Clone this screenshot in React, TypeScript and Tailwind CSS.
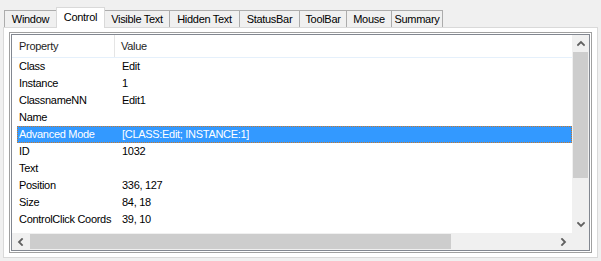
import { ReactNode } from "react";

type Row = {
  prop: string;
  value: string;
  selected?: boolean;
};

const tabs = [
  { label: "Window", w: "w-[53px]" },
  { label: "Control", w: "w-[49px]", active: true },
  { label: "Visible Text", w: "w-[66px]" },
  { label: "Hidden Text", w: "w-[71px]" },
  { label: "StatusBar", w: "w-[61px]" },
  { label: "ToolBar", w: "w-[48px]" },
  { label: "Mouse", w: "w-[46px]" },
  { label: "Summary", w: "w-[52px]" },
];

const rows: Row[] = [
  { prop: "Class", value: "Edit" },
  { prop: "Instance", value: "1" },
  { prop: "ClassnameNN", value: "Edit1" },
  { prop: "Name", value: "" },
  { prop: "Advanced Mode", value: "[CLASS:Edit; INSTANCE:1]", selected: true },
  { prop: "ID", value: "1032" },
  { prop: "Text", value: "" },
  { prop: "Position", value: "336, 127" },
  { prop: "Size", value: "84, 18" },
  { prop: "ControlClick Coords", value: "39, 10" },
];

// little chevrons used on the scroll buttons
const Arrow = ({ dir }: { dir: "up" | "down" | "left" | "right" }) => {
  const pts: Record<string, string> = {
    up: "1,5 4,2 7,5",
    down: "1,2 4,5 7,2",
    left: "5,1 2,4 5,7",
    right: "2,1 5,4 2,7",
  };
  return (
    <svg width="8" height="8" viewBox="0 0 8 8">
      <polyline
        points={pts[dir]}
        fill="none"
        stroke="#606060"
        strokeWidth="1.8"
        strokeLinecap="square"
      />
    </svg>
  );
};

const ScrollButton = ({ children }: { children: ReactNode }) => (
  <div className="w-[17px] h-[17px] flex items-center justify-center shrink-0">
    {children}
  </div>
);

const App = () => {
  return (
    <div
      className="w-[601px] h-[261px] bg-[#f0f0f0] text-[11px] tracking-[-0.3px] text-black overflow-hidden"
      style={{ fontFamily: '"Liberation Sans", Arial, sans-serif' }}
    >
      {/* tab strip */}
      <div className="flex items-end h-[27px] pl-[4px] pt-[6px]">
        {tabs.map((t, i) =>
          t.active ? (
            <div
              key={t.label}
              className={`${t.w} h-[21px] -ml-[1px] bg-white border border-b-0 border-[#d9d9d9] flex items-center justify-center pb-[2px] relative z-10 -mb-[1px]`}
            >
              {t.label}
            </div>
          ) : (
            <div
              key={t.label}
              className={`${t.w} h-[17px] bg-[#f0f0f0] border border-b-0 border-[#acacac] ${
                i === 0 ? "" : "-ml-[1px]"
              } flex items-center justify-center`}
            >
              {t.label}
            </div>
          )
        )}
      </div>

      {/* tab panel */}
      <div className="mx-[3px] h-[231px] border border-[#d9d9d9] bg-white pt-[4px] px-[5px]">
        <div className="h-[221px] border border-[#a0a0a0] p-[1px]">
          <div className="h-full border border-[#828790] bg-white flex flex-col">
            <div className="flex flex-1 min-h-0">
              {/* list */}
              <div className="flex-1 flex flex-col">
                <div className="h-[23px] flex items-center border-b border-[#e5f0fb] text-[#1e1e1e]">
                  <div className="w-[103px] pl-[7px] h-full flex items-center border-r border-[#e5e5e5]">
                    Property
                  </div>
                  <div className="pl-[6px]">Value</div>
                </div>
                {rows.map((r) => (
                  <div
                    key={r.prop}
                    className={
                      r.selected
                        ? "h-[17px] ml-[5px] flex items-center bg-[#3399ff] text-white border border-dotted border-[#c8782c]"
                        : "h-[17px] ml-[5px] flex items-center border border-transparent"
                    }
                  >
                    <div className="w-[103px] pl-[1px] whitespace-nowrap">{r.prop}</div>
                    <div className="pl-[1px] whitespace-nowrap">{r.value}</div>
                  </div>
                ))}
              </div>

              {/* vertical scrollbar */}
              <div className="w-[17px] bg-[#f0f0f0] flex flex-col">
                <ScrollButton>
                  <Arrow dir="up" />
                </ScrollButton>
                <div className="flex-1 flex flex-col">
                  <div className="h-[126px] mx-[1px] bg-[#cdcdcd]" />
                </div>
                <ScrollButton>
                  <Arrow dir="down" />
                </ScrollButton>
              </div>
            </div>

            {/* horizontal scrollbar */}
            <div className="h-[17px] flex bg-[#f0f0f0]">
              <ScrollButton>
                <Arrow dir="left" />
              </ScrollButton>
              <div className="flex-1 flex items-center">
                <div className="w-[421px] h-[15px] ml-[1px] bg-[#cdcdcd]" />
              </div>
              <ScrollButton>
                <Arrow dir="right" />
              </ScrollButton>
              <div className="w-[17px]" />
            </div>
          </div>
        </div>
      </div>
    </div>
  );
};

export default App;
